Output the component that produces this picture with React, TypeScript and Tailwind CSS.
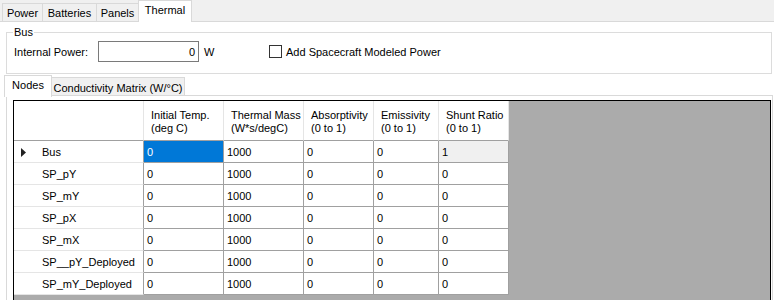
import React from "react";

const rows = [
  { name: "Bus", temp: "0", mass: "1000", abs: "0", emis: "0", shunt: "1" },
  { name: "SP_pY", temp: "0", mass: "1000", abs: "0", emis: "0", shunt: "0" },
  { name: "SP_mY", temp: "0", mass: "1000", abs: "0", emis: "0", shunt: "0" },
  { name: "SP_pX", temp: "0", mass: "1000", abs: "0", emis: "0", shunt: "0" },
  { name: "SP_mX", temp: "0", mass: "1000", abs: "0", emis: "0", shunt: "0" },
  { name: "SP__pY_Deployed", temp: "0", mass: "1000", abs: "0", emis: "0", shunt: "0" },
  { name: "SP_mY_Deployed", temp: "0", mass: "1000", abs: "0", emis: "0", shunt: "0" },
];

const columns = [
  { title: "Initial Temp.", sub: "(deg C)", w: "w-[80px]" },
  { title: "Thermal Mass", sub: "(W*s/degC)", w: "w-[80px]" },
  { title: "Absorptivity", sub: "(0 to 1)", w: "w-[70px]" },
  { title: "Emissivity", sub: "(0 to 1)", w: "w-[65px]" },
  { title: "Shunt Ratio", sub: "(0 to 1)", w: "w-[70px]" },
];

function TopTab({ label, width, selected }: { label: string; width: string; selected?: boolean }) {
  if (selected) {
    return (
      <div className={`${width} h-[22px] -mb-px bg-white border-l border-t border-r border-[#d9d9d9] flex items-center justify-center pb-[3px] relative z-10`}>
        {label}
      </div>
    );
  }
  return (
    <div className={`${width} h-[18px] bg-[#f0f0f0] border-l border-t border-[#d9d9d9] flex items-center justify-center pt-[2px]`}>
      {label}
    </div>
  );
}

export default function App() {
  return (
    <div className="w-[774px] h-[300px] overflow-hidden bg-white text-black text-[11px] leading-[13px] font-['Liberation_Sans',Arial,sans-serif]">
      {/* Main tabs */}
      <div className="h-[22px] bg-[#f0f0f0] border-b border-[#d9d9d9] flex items-end pl-[2px]">
        <TopTab label="Power" width="w-[40px]" />
        <TopTab label="Batteries" width="w-[54px]" />
        <TopTab label="Panels" width="w-[42px]" />
        <TopTab label="Thermal" width="w-[54px]" selected />
      </div>

      {/* Bus group */}
      <div className="relative mt-[10px] ml-[6px] mr-[2px] h-[42px] border border-[#dcdcdc]">
        <span className="absolute top-[-7px] left-[6px] bg-white px-px">Bus</span>
        <div className="flex items-center pt-[8px] pl-[7px]">
          <span className="w-[84px] pt-px">Internal Power:</span>
          <div className="w-[101px] h-[21px] border border-[#7a7a7a] flex items-center justify-end pr-[3px] pt-px">0</div>
          <span className="w-[70px] pl-[5px] pt-px">W</span>
          <div className="w-[13px] h-[13px] border border-[#333333] bg-white" />
          <span className="ml-[4px] pt-px">Add Spacecraft Modeled Power</span>
        </div>
      </div>

      {/* Inner tabs */}
      <div className="ml-[4px] mt-[1px]">
        <div className="flex items-end h-[20px]">
          <div className="w-[48px] h-[22px] -mb-[2px] bg-white border-l border-t border-r border-[#d9d9d9] flex items-center justify-center pb-[3px] relative z-10">
            Nodes
          </div>
          <div className="w-[133px] h-[18px] bg-[#f0f0f0] border-t border-r border-[#d9d9d9] flex items-center justify-center pt-[3px]">
            Conductivity Matrix (W/°C)
          </div>
        </div>
        <div className="ml-[2px] mr-[1px] h-[220px] border border-[#d9d9d9] pt-[4px]">
          {/* Data grid */}
          <div className="ml-[6px] mr-[1px] h-[210px] border border-black bg-[#ababab]">
            <div className="flex">
              <div className="w-[130px] h-[40px] bg-white border-r border-[#e5e5e5] border-b border-b-[#a0a0a0]" />
              {columns.map((c) => (
                <div
                  key={c.title}
                  className={`${c.w} h-[40px] bg-white border-r border-[#e5e5e5] border-b border-b-[#a0a0a0] flex flex-col justify-center pl-[7px] pt-[2px]`}
                >
                  <span>{c.title}</span>
                  <span>{c.sub}</span>
                </div>
              ))}
            </div>
            {rows.map((r, i) => (
              <div key={r.name} className="flex h-[22px]">
                <div className="w-[130px] bg-white border-r border-[#a0a0a0] border-b border-b-[#e5e5e5] flex items-center pl-[7px] pt-[2px]">
                  <span className="w-[21px] flex items-center">
                    {i === 0 && (
                      <svg width="5" height="9" viewBox="0 0 5 9">
                        <polygon points="0,0 5,4.5 0,9" fill="#222222" />
                      </svg>
                    )}
                  </span>
                  <span>{r.name}</span>
                </div>
                <div className={`w-[80px] border-r border-b border-[#a0a0a0] flex items-center pl-[3px] pt-[2px] ${i === 0 ? "bg-[#0078d7] text-white" : "bg-white"}`}>
                  {r.temp}
                </div>
                <div className="w-[80px] bg-white border-r border-b border-[#a0a0a0] flex items-center pl-[3px] pt-[2px]">{r.mass}</div>
                <div className="w-[70px] bg-white border-r border-b border-[#a0a0a0] flex items-center pl-[3px] pt-[2px]">{r.abs}</div>
                <div className="w-[65px] bg-white border-r border-b border-[#a0a0a0] flex items-center pl-[3px] pt-[2px]">{r.emis}</div>
                <div className={`w-[70px] border-r border-b border-[#a0a0a0] flex items-center pl-[3px] pt-[2px] ${i === 0 ? "bg-[#f0f0f0]" : "bg-white"}`}>
                  {r.shunt}
                </div>
              </div>
            ))}
          </div>
        </div>
      </div>
    </div>
  );
}
